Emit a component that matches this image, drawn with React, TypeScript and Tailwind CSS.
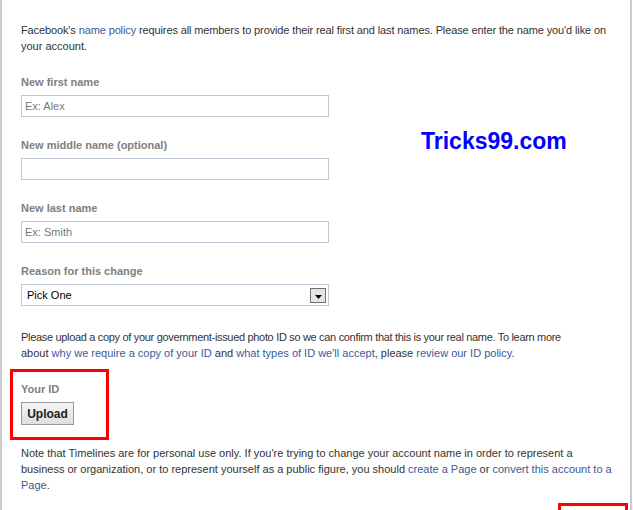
import React from "react";

const link = "text-[#3b5998]";

function Label({ children }: { children: React.ReactNode }) {
  return (
    <div className="font-bold text-[#808080] text-[11px] leading-[16px] h-[16px]">{children}</div>
  );
}

function TextBox({ placeholder }: { placeholder?: string }) {
  return (
    <div className="mt-[5px] w-[308px] h-[22px] border border-[#bdc7d8] bg-white flex items-center pl-[3px] text-[11px] text-[#777]">
      {placeholder}
    </div>
  );
}

export default function App() {
  return (
    <div
      className="w-[632px] h-[510px] overflow-hidden bg-white border-l-2 border-r-2 border-[#cccccc] relative text-[#333] text-[11px] leading-[16px]"
      style={{ fontFamily: '"Liberation Sans", Arial, sans-serif' }}
    >
      <div className="pl-[19px] pt-[22px]">
        <p className="whitespace-nowrap">
          <span className="tracking-[-0.12px]">
            Facebook's <span className={link}>name policy</span> requires all members to provide their real first and last names. Please enter the name you'd like on
          </span>
          <br />
          your account.
        </p>

        <div className="mt-[20px]">
          <Label>New first name</Label>
          <TextBox placeholder="Ex: Alex" />
        </div>
        <div className="mt-[20px]">
          <Label>New middle name (optional)</Label>
          <TextBox />
        </div>
        <div className="mt-[20px]">
          <Label>New last name</Label>
          <TextBox placeholder="Ex: Smith" />
        </div>
        <div className="mt-[20px]">
          <Label>Reason for this change</Label>
          <div className="mt-[5px] w-[308px] h-[22px] border border-[#bdc7d8] bg-white flex items-center justify-between pl-[5px] pr-[2px] text-[11px] text-black">
            <span>Pick One</span>
            <div className="w-[16px] h-[15px] border border-[#6f6f6f] bg-[#e4e4e4] flex items-end justify-center pb-[3px]">
              <svg width="7" height="4" viewBox="0 0 7 4">
                <path d="M0 0 H7 L3.5 4 Z" fill="#000" />
              </svg>
            </div>
          </div>
        </div>

        <p className="mt-[23px] whitespace-nowrap">
          <span className="tracking-[-0.32px]">
            Please upload a copy of your government-issued photo ID so we can confirm that this is your real name. To learn more
          </span>
          <br />
          about <span className={link}>why we require a copy of your ID</span> and <span className={link}>what types of ID we'll accept</span>, please <span className={link}>review our ID policy</span>.
        </p>

        <div className="mt-[8px] -ml-[11px] w-[99px] h-[71px] border-[3px] border-[#ff0000] pl-[8px] pt-[9px]">
          <Label>Your ID</Label>
          <button className="mt-[5px] w-[53px] h-[23px] border border-[#999] bg-gradient-to-b from-[#f6f6f6] to-[#dedede] font-bold text-[12px] text-[#222] flex items-center justify-center">
            Upload
          </button>
        </div>

        <p className="mt-[5px] whitespace-nowrap">
          Note that Timelines are for personal use only. If you're trying to change your account name in order to represent a
          <br />
          business or organization, or to represent yourself as a public figure, you should <span className={link}>create a Page</span> or <span className={link}>convert this account to a
          <br />
          Page</span>.
        </p>

        <div className="mt-[10px] ml-[537px] w-[70px] h-[20px] border-[3px] border-[#ff0000] border-b-0" />
      </div>

      <div
        className="absolute left-[419px] top-[127px] text-[23px] leading-[28px] font-bold text-[#0000ff]"
        style={{ fontFamily: '"Liberation Sans", Arial, sans-serif' }}
      >
        Tricks99.com
      </div>
    </div>
  );
}
